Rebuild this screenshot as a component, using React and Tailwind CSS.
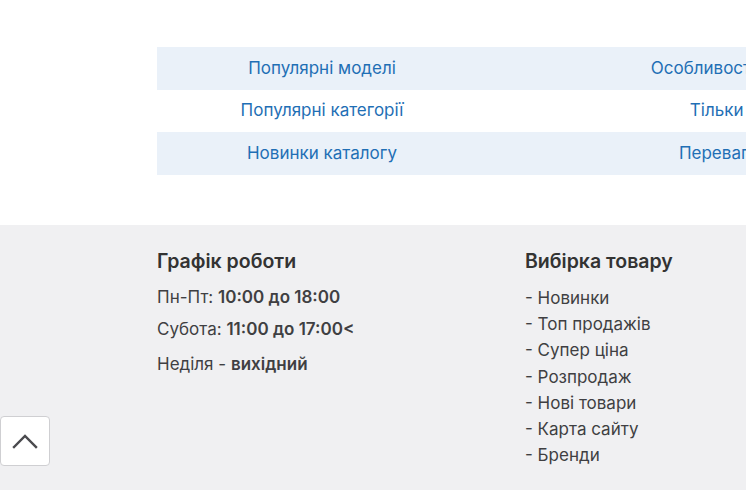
const links = [
  ["Популярні моделі", "Особливості продукції", "pr-[30px]"],
  ["Популярні категорії", "Тільки оригінали", ""],
  ["Новинки каталогу", "Переваги магазину", ""],
];

const picks = [
  "Новинки",
  "Топ продажів",
  "Супер ціна",
  "Розпродаж",
  "Нові товари",
  "Карта сайту",
  "Бренди",
];

export default function App() {
  return (
    <div
      className="relative h-[490px] w-[746px] overflow-hidden bg-white"
      style={{ fontFamily: "Inter, 'Noto Sans', sans-serif" }}
    >
      {/* seo links table */}
      <div className="pt-[47px] pl-[157px]">
        <div className="w-[876px] text-[17px] text-[#1f6fb5]">
          {links.map(([a, b, pad], i) => (
            <div
              key={a}
              className={`grid h-[42.7px] grid-cols-[330px_546px] items-center ${
                i % 2 === 0 ? "bg-[#eaf1f9]" : "bg-white"
              }`}
            >
              <a className="text-center whitespace-nowrap">{a}</a>
              <a className={`text-center whitespace-nowrap ${pad}`}>{b}</a>
            </div>
          ))}
        </div>
      </div>

      {/* footer */}
      <footer className="mt-[50px] h-[265px] bg-[#f0f0f2] pl-[157px] pt-[24px] text-[#3f3f42]">
        <div className="grid grid-cols-[368px_1fr]">
          <div>
            <h3 className="text-[19.5px] font-semibold leading-[24px] text-[#333]">Графік роботи</h3>
            <p className="mt-[13px] text-[17px] leading-[22px]">
              Пн-Пт: <b className="font-semibold">10:00 до 18:00</b>
            </p>
            <p className="mt-[10px] text-[17px] leading-[22px]">
              Субота: <b className="font-semibold">11:00 до 17:00&lt;</b>
            </p>
            <p className="mt-[13px] text-[17px] leading-[22px]">
              Неділя - <b className="font-semibold">вихідний</b>
            </p>
          </div>
          <div>
            <h3 className="text-[19.5px] font-semibold leading-[24px] text-[#333]">Вибірка товару</h3>
            <ul className="mt-[12px] text-[17px] leading-[26.2px]">
              {picks.map((p) => (
                <li key={p}>- {p}</li>
              ))}
            </ul>
          </div>
        </div>
      </footer>

      {/* back to top */}
      <button className="absolute left-0 top-[416px] flex h-[50px] w-[50px] items-center justify-center rounded-[4px] border border-[#cfcfd2] bg-white">
        <svg width="26" height="16" viewBox="0 0 26 16" fill="none" stroke="#4a4a4e" strokeWidth="2.4" strokeLinecap="square">
          <path d="M2 14 13 3l11 11" />
        </svg>
      </button>
    </div>
  );
}
